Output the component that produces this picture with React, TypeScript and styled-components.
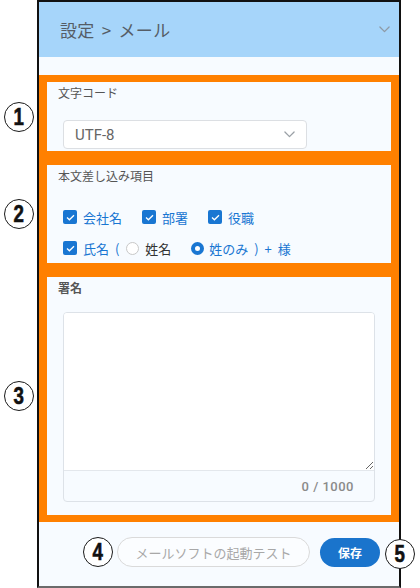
import styled, { createGlobalStyle } from "styled-components";

const GlobalStyle = createGlobalStyle`
  html, body {
    margin: 0;
    padding: 0;
    background: #ffffff;
  }
  body {
    font-family: Roboto, "Noto Sans CJK JP", sans-serif;
  }
`;

const Canvas = styled.div`
  width: 420px;
  height: 588px;
  box-sizing: border-box;
  padding-left: 37px;
  background: #ffffff;
  overflow: hidden;
`;

const Phone = styled.div`
  width: 364px;
  height: 588px;
  box-sizing: border-box;
  border: 2px solid #111;
  border-bottom-color: #6b6b6b;
  background: #f7fbff;
  display: flex;
  flex-direction: column;
`;

const Header = styled.header`
  height: 55px;
  flex-shrink: 0;
  background: #a6d5fa;
  display: flex;
  align-items: center;
  justify-content: space-between;
  padding: 0 9px 0 21px;
`;

const HeaderTitle = styled.h1`
  margin: 0;
  font-size: 17px;
  font-weight: 400;
  color: #555d66;
  font-family: "Noto Sans CJK JP", sans-serif;
  letter-spacing: 0.3px;
  word-spacing: 3px;
`;

const Boxes = styled.div`
  margin-top: 18px;
  display: flex;
  flex-direction: column;
`;

const MarkBox = styled.section<{ $h: number }>`
  position: relative;
  height: ${(p) => p.$h}px;
  box-sizing: border-box;
  border-style: solid;
  border-color: #ff8000;
  border-width: 7px 8px;
  padding: 3px 0 0 11px;
`;

const Badge = styled.div`
  width: 30px;
  height: 30px;
  box-sizing: border-box;
  border: 1.5px solid #1a1a1a;
  border-radius: 50%;
  background: #ffffff;
  display: flex;
  align-items: center;
  justify-content: center;
  flex-shrink: 0;
  span {
    display: inline-block;
    font-family: "Liberation Sans", Arial, sans-serif;
    font-weight: 700;
    font-size: 24px;
    line-height: 1;
    color: #111;
    -webkit-text-stroke: 0.6px #111;
    transform: scaleX(0.78);
  }
`;

const SideBadge = styled(Badge)`
  position: absolute;
  left: -43px;
  top: 50%;
  transform: translateY(-50%);
`;

const EdgeBadge = styled(Badge)`
  position: absolute;
  right: -16px;
  top: 50%;
  transform: translateY(-50%);
  z-index: 2;
`;

const SectionLabel = styled.div<{ $strong?: boolean }>`
  font-family: "Noto Sans CJK JP", sans-serif;
  font-size: 12px;
  line-height: 16px;
  color: #555;
  font-weight: ${(p) => (p.$strong ? 700 : 400)};
`;

const Select = styled.div`
  margin: 19px 0 0 5px;
  width: 244px;
  height: 29px;
  box-sizing: border-box;
  border: 1px solid #dcdfe3;
  border-radius: 4px;
  background: #ffffff;
  display: flex;
  align-items: center;
  justify-content: space-between;
  padding: 0 11px 0 11px;
  font-size: 15px;
  color: #666;
`;

const Rows = styled.div`
  margin: 23px 0 0 5px;
  display: flex;
  flex-direction: column;
  gap: 11px;
`;

const Row = styled.div`
  display: flex;
  align-items: center;
  height: 20px;
`;

const Option = styled.label<{ $gap?: number; $after?: number }>`
  display: flex;
  align-items: center;
  gap: ${(p) => p.$gap ?? 6}px;
  margin-right: ${(p) => p.$after ?? 20}px;
  font-family: "Noto Sans CJK JP", sans-serif;
  font-size: 13px;
  color: #1976d2;
  word-spacing: 3px;
  white-space: pre;
`;

const PlainText = styled.span`
  color: #333;
`;

const Check = styled.span`
  width: 14px;
  height: 14px;
  border-radius: 2px;
  background: #1976d2;
  display: inline-flex;
  align-items: center;
  justify-content: center;
`;

const Radio = styled.span<{ $on?: boolean }>`
  width: 13px;
  height: 13px;
  box-sizing: border-box;
  border-radius: 50%;
  background: #ffffff;
  border: ${(p) => (p.$on ? "4px solid #1976d2" : "1px solid #c8c8c8")};
`;

const TextWrap = styled.div`
  margin: 16px 0 0 5px;
  width: 312px;
  box-sizing: border-box;
  border: 1px solid #dde2e8;
  border-radius: 4px;
  overflow: hidden;
  background: #f7fbff;
`;

const Area = styled.textarea`
  display: block;
  width: 100%;
  height: 158px;
  box-sizing: border-box;
  border: none;
  border-bottom: 1px solid #e3e7ec;
  background: #ffffff;
  resize: vertical;
  outline: none;
  margin: 0;
`;

const Counter = styled.div`
  height: 30px;
  display: flex;
  align-items: center;
  justify-content: flex-end;
  padding-right: 20px;
  font-size: 13px;
  font-weight: 500;
  color: #8a8a8a;
  letter-spacing: 0.5px;
`;

const Footer = styled.footer`
  position: relative;
  flex: 1;
  display: flex;
  align-items: center;
  justify-content: flex-end;
  padding: 0 19px 4px 0;
  gap: 4px;
`;

const OutlineButton = styled.button`
  width: 193px;
  height: 30px;
  border: 1px solid #dadada;
  border-radius: 15px;
  background: #fbfdff;
  font-family: "Noto Sans CJK JP", sans-serif;
  font-size: 13px;
  color: #a8a8a8;
  margin-right: 6px;
  padding: 0;
`;

const SaveButton = styled.button`
  width: 60px;
  height: 29px;
  border: none;
  border-radius: 15px;
  background: #1a74cc;
  color: #ffffff;
  font-family: "Noto Sans CJK JP", sans-serif;
  font-size: 12px;
  font-weight: 700;
  padding: 0;
`;

const Chevron = ({ color, w = 12 }: { color: string; w?: number }) => (
  <svg width={w} height={w * 0.6} viewBox="0 0 12 7" fill="none">
    <polyline points="1,1 6,6 11,1" stroke={color} strokeWidth="1.4" strokeLinecap="round" strokeLinejoin="round" />
  </svg>
);

const CheckBox = () => (
  <Check>
    <svg width="9" height="7" viewBox="0 0 9 7" fill="none">
      <polyline points="1,3.5 3.4,5.8 8,1.2" stroke="#fff" strokeWidth="1.3" />
    </svg>
  </Check>
);

const Num = ({ n }: { n: number }) => <span>{n}</span>;

export default function App() {
  return (
    <Canvas>
      <GlobalStyle />
      <Phone>
        <Header>
          <HeaderTitle>設定 &gt; メール</HeaderTitle>
          <Chevron color="#8e9aa6" w={11} />
        </Header>

        <Boxes>
          <MarkBox $h={83}>
            <SideBadge>
              <Num n={1} />
            </SideBadge>
            <SectionLabel>文字コード</SectionLabel>
            <Select>
              UTF-8
              <Chevron color="#9aa0a6" w={11} />
            </Select>
          </MarkBox>

          <MarkBox $h={112}>
            <SideBadge>
              <Num n={2} />
            </SideBadge>
            <SectionLabel>本文差し込み項目</SectionLabel>
            <Rows>
              <Row>
                <Option>
                  <CheckBox />
                  会社名
                </Option>
                <Option>
                  <CheckBox />
                  部署
                </Option>
                <Option>
                  <CheckBox />
                  役職
                </Option>
              </Row>
              <Row>
                <Option $after={7}>
                  <CheckBox />
                  氏名 (
                </Option>
                <Option $after={20}>
                  <Radio />
                  <PlainText>姓名</PlainText>
                </Option>
                <Option $gap={5}>
                  <Radio $on />
                  姓のみ ) + 様
                </Option>
              </Row>
            </Rows>
          </MarkBox>

          <MarkBox $h={252}>
            <SideBadge>
              <Num n={3} />
            </SideBadge>
            <SectionLabel $strong>署名</SectionLabel>
            <TextWrap>
              <Area readOnly />
              <Counter>0 / 1000</Counter>
            </TextWrap>
          </MarkBox>
        </Boxes>

        <Footer>
          <Badge>
            <Num n={4} />
          </Badge>
          <OutlineButton>メールソフトの起動テスト</OutlineButton>
          <SaveButton>保存</SaveButton>
          <EdgeBadge>
            <Num n={5} />
          </EdgeBadge>
        </Footer>
      </Phone>
    </Canvas>
  );
}
